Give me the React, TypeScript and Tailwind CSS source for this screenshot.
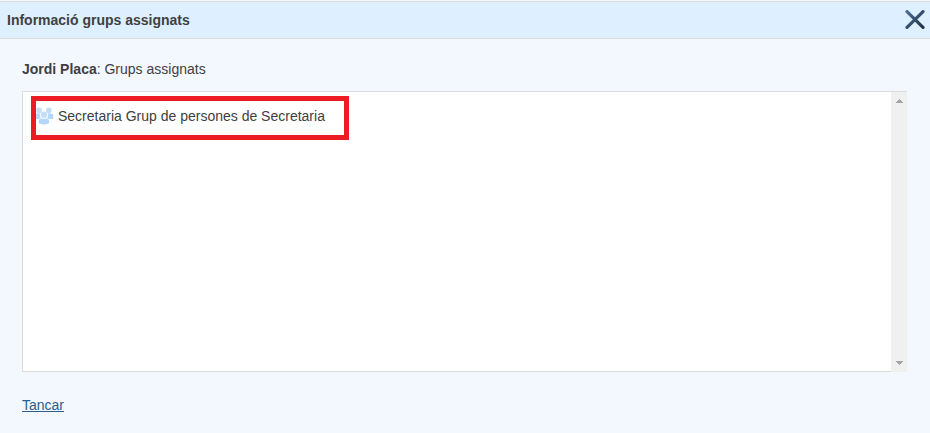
import { memo } from "react";

interface Group {
  name: string;
  description: string;
}

const groups: Group[] = [
  { name: "Secretaria", description: "Grup de persones de Secretaria" },
];

const CloseIcon = () => (
  <svg viewBox="0 0 20 20" className="block size-5" aria-hidden="true">
    <defs>
      <linearGradient id="close-ink" x1="0" y1="0" x2="1" y2="1">
        <stop offset="0" stopColor="#4d6d8e" />
        <stop offset="1" stopColor="#20344c" />
      </linearGradient>
    </defs>
    <path
      d="M2 1.6 18 17.4M18 1.6 2 17.4"
      fill="none"
      stroke="url(#close-ink)"
      strokeWidth="3.2"
      strokeLinecap="round"
    />
  </svg>
);

const GroupIcon = () => (
  <svg
    viewBox="0 0 18 18"
    className="block size-[18px] shrink-0"
    fill="#b3d8fb"
    aria-hidden="true"
  >
    <circle cx="3" cy="3.4" r="2.8" fill="#c3def5" />
    <circle cx="12.8" cy="3.4" r="2.8" fill="#c3def5" />
    <path d="M0 12V6.6H4.2Q3.4 8.8 4.8 10.6L3 12Z" />
    <path d="M17.2 12V8.6Q17.2 6.6 15.2 6.6H11.8Q12.6 8.8 11.2 10.6L13 12Z" />
    <circle cx="8" cy="7.8" r="3.2" fill="#c3def5" />
    <path d="M4.8 11.2Q8 12.2 11.2 11.2 13.2 12 13.2 14V16.2Q8 19 2.8 16.2V14Q2.8 12 4.8 11.2Z" />
  </svg>
);

const ScrollTrack = () => (
  <div
    className="flex w-4 shrink-0 flex-col items-center justify-between bg-[#f0f0f0] py-[7px]"
    aria-hidden="true"
  >
    <svg viewBox="0 0 7 4" className="block h-1 w-[7px]" fill="#a3a3a3">
      <path d="M0 4V3H1V2H2V1H3V0H4V1H5V2H6V3H7V4Z" />
    </svg>
    <svg viewBox="0 0 7 4" className="block h-1 w-[7px]" fill="#a3a3a3">
      <path d="M0 0V1H1V2H2V3H3V4H4V3H5V2H6V1H7V0Z" />
    </svg>
  </div>
);

const GroupList = memo(({ items }: { items: Group[] }) => (
  <div className="flex h-[281px] border-t border-l border-[#dcdcdc] bg-white">
    <ul className="flex-1 border-b border-[#dcdcdc] px-2 py-1">
      {items.map((group) => (
        <li
          key={group.name}
          className="flex h-11 w-[318px] items-center gap-1 border-5 border-[#ed1c24] pb-1"
        >
          <GroupIcon />
          <span>
            {group.name} {group.description}
          </span>
        </li>
      ))}
    </ul>
    <ScrollTrack />
  </div>
));

export default function App() {
  return (
    <div className="min-h-screen bg-[#f3f8ff] pt-px font-['Liberation_Sans',Arial,sans-serif] text-sm leading-5 text-[#404040]">
      {/* Title bar */}
      <header className="flex h-[38px] items-center justify-between border-t border-b border-[#dcdcdc] bg-[#def0ff] pr-[5px] pb-px pl-[7px]">
        <h1 className="font-bold">Informació grups assignats</h1>
        <button type="button" aria-label="Tancar">
          <CloseIcon />
        </button>
      </header>

      <main className="pt-5 pr-[23px] pb-4 pl-[22px]">
        <p className="mb-3">
          <b>Jordi Placa</b>: Grups assignats
        </p>
        <GroupList items={groups} />
        <a href="#" className="mt-[23px] inline-block text-[#2a5d8c] underline">
          Tancar
        </a>
      </main>
    </div>
  );
}
